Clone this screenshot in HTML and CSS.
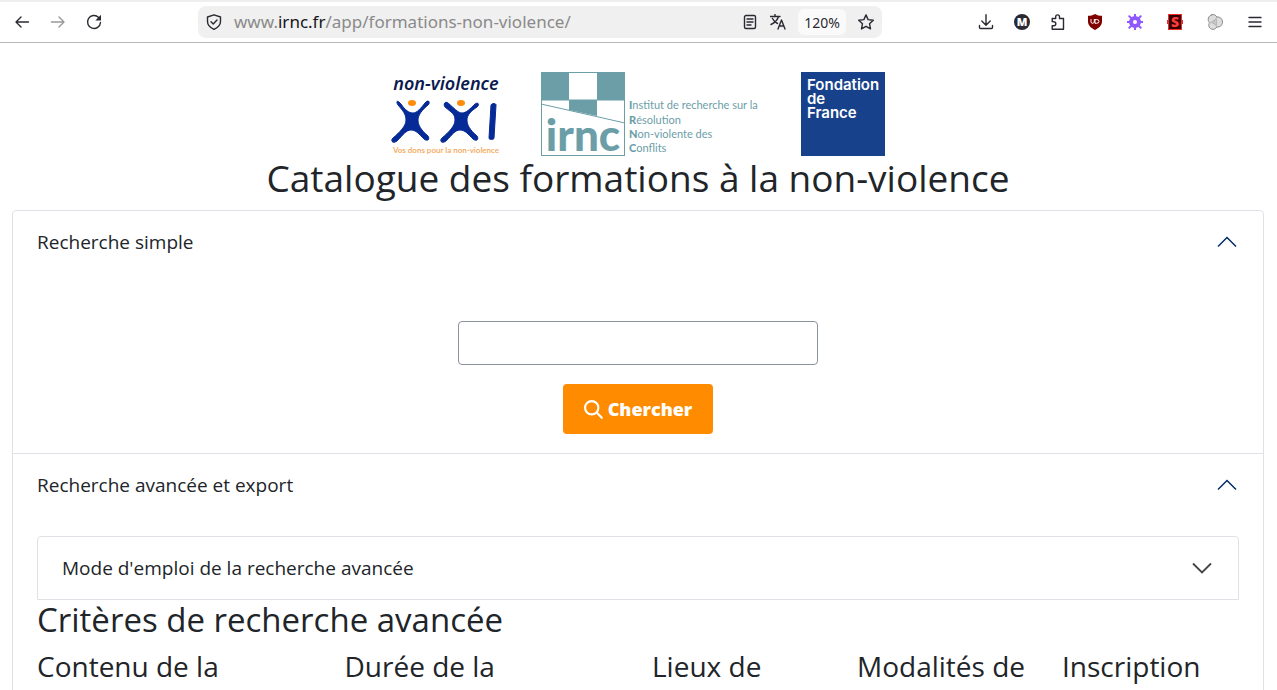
FILE: index.html
```html
<!DOCTYPE html>
<html lang="fr">
<head>
    <meta charset="UTF-8">
    <meta name="viewport" content="width=device-width, initial-scale=1">
    <title>Catalogue des formations à la non-violence</title>
    <link rel="stylesheet" href="styles.css">
</head>
<body>
    <div class="browser-bar">
        <div class="nav-buttons">
            <button type="button" aria-label="Page précédente">
                <svg width="16" height="16" viewBox="0 0 16 16"><path d="M14.500 8H2M7 3 2 8l5 5"/></svg>
            </button>
            <button type="button" class="disabled" aria-label="Page suivante">
                <svg width="16" height="16" viewBox="0 0 16 16"><path d="M1.500 8H14M9 3l5 5-5 5"/></svg>
            </button>
            <button type="button" aria-label="Actualiser">
                <svg width="16" height="16" viewBox="0 0 16 16"><path d="M14.500 8.500A6.500 6.500 0 1 1 12.600 3.400"/><path class="solid" d="M15 .8v5.700H9.300z"/></svg>
            </button>
        </div>

        <div class="url-bar">
            <svg width="16" height="16" viewBox="0 0 16 16"><path d="M8 .8 14.500 3v4.500c0 3.500-2.500 6-6.500 7.900-4-1.900-6.500-4.400-6.500-7.900V3z"/><path d="m5 7.800 2.200 2.200L11 6"/></svg>
            <div class="url">www.<span>irnc.fr</span>/app/formations-non-violence/</div>
            <button type="button" aria-label="Mode lecture">
                <svg width="16" height="16" viewBox="0 0 16 16"><rect x="2.500" y="1.500" width="11" height="13" rx="1.500"/><path d="M5 5h6M5 8h6M5 11h4"/></svg>
            </button>
            <button type="button" aria-label="Traduire">
                <svg width="16" height="16" viewBox="0 0 16 16"><path d="M0 2.500h10M5 .5v2M8.500 2.500C7.500 6.500 4 9 1 10.500M2.500 4.500c1 2.200 3 4 5 5M8 15l3.500-9 3.500 9M9.200 12h4.600"/></svg>
            </button>
            <button type="button" class="zoom">120%</button>
            <button type="button" aria-label="Marque-page">
                <svg width="16" height="16" viewBox="0 0 16 16"><path d="m8 .9 2.100 4.700 5.200.6-3.800 3.500 1 5.200L8 12.300l-4.500 2.600 1-5.200L.7 6.200l5.200-.6z"/></svg>
            </button>
        </div>

        <div class="toolbar">
            <div class="tools">
                <button type="button" aria-label="Téléchargements">
                    <svg width="16" height="16" viewBox="0 0 16 16"><path d="M8 .8v10M3.800 7 8 11.200 12.200 7M1.500 11.500v2q0 1 1 1h11q1 0 1-1v-2"/></svg>
                </button>
                <button type="button" aria-label="Compte M">
                    <svg width="16" height="16" viewBox="0 0 16 16"><circle class="solid" cx="8" cy="8" r="8"/><text class="badge-m" x="8" y="12" text-anchor="middle">M</text></svg>
                </button>
                <button type="button" aria-label="Extensions">
                    <svg width="16" height="16" viewBox="0 0 16 16"><path d="M2.200 7.500V4.500h3.500V2.800a1.900 1.900 0 0 1 3.800 0v1.700h4v10.700H2.200v-3.500h1.600a2 2 0 0 0 0-4z"/></svg>
                </button>
            </div>
            <div class="extensions">
                <button type="button" aria-label="Bloqueur">
                    <svg width="16" height="16" viewBox="0 0 16 16"><path class="shield" d="M8 0c2 1.300 4.500 1.800 7 1.800v5.700c0 3.800-3 6.500-7 8.500-4-2-7-4.700-7-8.500V1.800C3.500 1.800 6 1.300 8 0z"/><path class="shield-mark" d="M4 5.500v2.200q0 1.600 1.500 1.600T7.300 8V5.500M8 5.500v3.800h1.500q2.500 0 2.500-1.900T9.500 5.500H8"/></svg>
                </button>
                <button type="button" aria-label="Réglages">
                    <svg width="16" height="16" viewBox="0 0 16 16"><path class="gear" d="M8 0v16M0 8h16M2.300 2.300l11.400 11.400M13.700 2.300 2.300 13.700"/><circle class="gear-ring" cx="8" cy="8" r="4"/></svg>
                </button>
                <button type="button" aria-label="Extension S">
                    <svg width="16" height="16" viewBox="0 0 16 16"><path class="red" d="M1 0h14v6h1v4h-1v6H1v-6H0V6h1z"/><path class="dark" d="M2 1h12v14H2z"/><text class="badge-s" x="8" y="13" text-anchor="middle">S</text></svg>
                </button>
                <button type="button" aria-label="Confidentialité">
                    <svg width="16" height="16" viewBox="0 0 16 16"><path class="rings" d="M5 .7c2-.5 4 .5 4.800 2.300C13 2.500 15.500 5 15.500 8S13 13.500 9.800 13c-1 2-3.300 2.900-5.300 2.100C1.800 14 1 11 2.500 8.800 0 6 1.200 1.500 5 .7z"/><path class="ring-lines" d="M2.500 8.800 7 8M9.800 3 7.500 7M9.800 13 7.500 9M4.500 8l5-3v6z"/></svg>
                </button>
                <button type="button" aria-label="Menu">
                    <svg width="16" height="16" viewBox="0 0 16 16"><path d="M2 3.500h12M2 8h12M2 12.500h12"/></svg>
                </button>
            </div>
        </div>
    </div>

    <main>
        <div class="logos">
            <a href="#" aria-label="Non-violence XXI">
                <svg width="110" height="84" viewBox="0 0 110 84">
                    <text class="nv-title" x="55" y="18" text-anchor="middle">non-violence</text>
                    <g class="nv-blue">
                        <path d="M8 30 10 32C14 38 18 41 22 41S30 36 34 31C37 27 40 30 37 33C31 38 27 43 27 48S30 58 37 64C39 67 37 70 33 67C28 62 25 58 20 58S12 63 6 69C2 72-1 69 2 66C9 60 15 54 15 48S12 39 7 33C5 30 6 28 8 30z"/>
                        <path d="M57 31C63 36 67 41 71 41S79 37 84 32C87 30 89 32 86 35C80 39 76 43 76 48S79 58 86 64C88 67 86 70 82 67C77 62 74 58 69 58S61 63 55 69C51 72 48 69 51 66C58 60 64 54 64 48S61 41 54 35C52 32 54 29 57 31z"/>
                        <path d="M100 33C101 31 105 31 105 33L103 66C103 68 98 68 98 66z"/>
                    </g>
                    <ellipse class="nv-orange" cx="21" cy="31" rx="4" ry="3"/>
                    <ellipse class="nv-orange" cx="70" cy="31" rx="4" ry="3"/>
                    <text class="nv-tag" x="55" y="81" text-anchor="middle">Vos dons pour la non-violence</text>
                </svg>
            </a>
            <a href="#" aria-label="IRNC">
                <svg width="220" height="84" viewBox="0 0 220 84">
                    <rect class="irnc-frame" x=".5" y=".5" width="83" height="83"/>
                    <path class="irnc-fill" d="M0 0h28v28H0zM56 0h28v28H56zM28 28h28v16L28 38z"/>
                    <path class="irnc-frame" d="M0 32 84 51M0 28h84M28 0h28"/>
                    <text class="irnc-fill irnc-name" x="42" y="79" text-anchor="middle">irnc</text>
                    <g class="irnc-fill irnc-text">
                        <text x="88" y="37"><tspan>I</tspan>nstitut de recherche sur la</text>
                        <text x="88" y="52"><tspan>R</tspan>ésolution</text>
                        <text x="88" y="66"><tspan>N</tspan>on-violente des</text>
                        <text x="88" y="80"><tspan>C</tspan>onflits</text>
                    </g>
                </svg>
            </a>
            <a href="#" class="fdf">Fondation<br>de<br>France</a>
        </div>

        <h1>Catalogue des formations à la non-violence</h1>

        <div class="accordion">
            <section>
                <button type="button" class="accordion-button open" aria-expanded="true">
                    Recherche simple
                    <svg width="24" height="24" viewBox="0 0 16 16"><path d="m2 11 6-6 6 6"/></svg>
                </button>
                <form class="simple-search">
                    <input type="text" name="q" aria-label="Recherche simple">
                    <button type="submit" class="btn-search">
                        <svg width="19" height="19" viewBox="0 0 16 16"><circle cx="6.500" cy="6.500" r="5.600"/><path d="m10.800 10.800 4.200 4.200"/></svg>
                        Chercher
                    </button>
                </form>
            </section>

            <section>
                <button type="button" class="accordion-button open" aria-expanded="true">
                    Recherche avancée et export
                    <svg width="24" height="24" viewBox="0 0 16 16"><path d="m2 11 6-6 6 6"/></svg>
                </button>
                <div class="advanced-search">
                    <div class="help">
                        <button type="button" class="accordion-button" aria-expanded="false">
                            Mode d'emploi de la recherche avancée
                            <svg width="24" height="24" viewBox="0 0 16 16"><path d="m2 5 6 6 6-6"/></svg>
                        </button>
                    </div>
                    <h2>Critères de recherche avancée</h2>
                    <div class="criteria">
                        <h3>Contenu de la formation</h3>
                        <h3>Durée de la formation</h3>
                        <h3>Lieux de formation</h3>
                        <h3>Modalités de la formation</h3>
                        <h3>Inscription</h3>
                    </div>
                </div>
            </section>
        </div>
    </main>
</body>
</html>
```
FILE: styles.css
```css
* {
    box-sizing: border-box;
}
body {
    display: flex;
    flex-direction: column;
    height: 100vh;
    margin: 0;
    overflow: hidden;
    font-family: "Open Sans", "Noto Sans", sans-serif;
    font-size: 19px;
    line-height: 1.5;
    color: #212529;
    background-color: #fff;
}
button {
    font-family: inherit;
    color: inherit;
    border: none;
    background: none;
    cursor: pointer;
}
svg {
    display: block;
    fill: none;
    stroke: currentColor;
}
svg text {
    stroke: none;
}

/* browser toolbar */
.browser-bar {
    display: flex;
    flex: none;
    align-items: center;
    justify-content: space-between;
    height: 43px;
    padding: 0 14px;
    border-top: 2px solid #eee;
    border-bottom: 1px solid #b8b8b8;
    color: #2b2a33;
    font-family: "Noto Sans", sans-serif;
}
.browser-bar button {
    flex: none;
    padding: 0;
}
.browser-bar svg {
    flex: none;
    stroke-width: 1.4;
    stroke-linejoin: round;
    stroke-linecap: round;
}
.nav-buttons {
    display: flex;
    gap: 20px;
}
.nav-buttons .disabled {
    color: #999;
}
.url-bar {
    display: flex;
    align-items: center;
    gap: 12px;
    width: 684px;
    height: 32px;
    padding: 0 8px;
    border-radius: 8px;
    background-color: #f0f0f0;
}
.url {
    flex: 1;
    font-size: 17px;
    color: #8a8a8a;
}
.url span {
    color: #15141a;
}
.url-bar .zoom {
    width: 48px;
    height: 26px;
    border-radius: 6px;
    background-color: #fafafa;
    font-size: 14px;
}
.toolbar {
    display: flex;
    gap: 21px;
}
.tools {
    display: flex;
    gap: 20px;
}
.extensions {
    display: flex;
    gap: 24px;
}
.solid {
    fill: currentColor;
    stroke: none;
}
.badge-m {
    font-size: 11px;
    font-weight: 900;
    fill: #fff;
}
.shield {
    fill: #800000;
    stroke: none;
}
.shield-mark {
    stroke: #fff;
    stroke-width: 1;
}
.gear {
    stroke: #9059ff;
    stroke-width: 2;
}
.gear-ring {
    stroke: #9059ff;
    stroke-width: 4;
    fill: #fff;
}
.red {
    fill: #f02a2a;
    stroke: none;
}
.dark {
    fill: #300;
    stroke: none;
}
.badge-s {
    font-size: 14px;
    font-weight: 900;
    fill: #ff3a3a;
}
.rings {
    fill: #ddd;
    stroke: #8a8a8a;
    stroke-width: 1;
}
.ring-lines {
    fill: #ccc;
    stroke: #b8b8b8;
    stroke-width: 1;
}

/* page */
main {
    flex: 1;
    min-height: 0;
    padding: 29px 13px 0 12px;
    overflow: hidden;
}
.logos {
    display: flex;
    justify-content: center;
    gap: 40px;
}
.nv-title {
    font-family: "Noto Sans", sans-serif;
    font-size: 18px;
    font-style: italic;
    font-weight: 600;
    fill: #0b1a50;
}
.nv-blue {
    fill: #062a96;
    stroke: #062a96;
}
.nv-orange {
    fill: #ff8c0a;
    stroke: none;
}
.nv-tag {
    font-family: Lato, sans-serif;
    font-size: 8px;
    font-weight: 600;
    fill: #f5a656;
}
.irnc-frame {
    stroke: #6c9ea8;
}
.irnc-fill {
    fill: #6c9ea8;
    stroke: none;
}
.irnc-name {
    font-family: Lato, sans-serif;
    font-size: 44px;
    font-weight: 900;
}
.irnc-text {
    font-family: Lato, sans-serif;
    font-size: 11px;
}
.irnc-text tspan {
    font-weight: 900;
}
.fdf {
    width: 84px;
    height: 84px;
    padding: 6px;
    background-color: #17428b;
    color: #fff;
    font-family: Inter, sans-serif;
    font-size: 15px;
    font-weight: 600;
    line-height: 14px;
    text-decoration: none;
}
h1, h2, h3 {
    margin: 0;
    font-weight: 400;
}
h1 {
    margin-bottom: 10px;
    font-size: 37px;
    line-height: 44px;
    text-align: center;
}
h2 {
    margin-bottom: 9px;
    font-size: 33px;
    line-height: 40px;
}
h3 {
    padding: 0 14px;
    font-size: 28px;
    line-height: 34px;
}
.accordion {
    border: 1px solid #dee2e6;
    border-radius: 4px;
}
.accordion section + section {
    border-top: 1px solid #dee2e6;
}
.accordion-button {
    display: flex;
    align-items: center;
    justify-content: space-between;
    width: 100%;
    height: 62px;
    padding: 0 24px;
    font-size: 19px;
    text-align: left;
}
.accordion-button svg {
    color: #444;
    stroke-width: 1.2;
}
.open svg {
    color: #052c65;
    stroke-width: 1;
}
.simple-search {
    display: flex;
    flex-direction: column;
    align-items: center;
    gap: 19px;
    padding: 48px 24px 19px;
}
.simple-search input {
    width: 360px;
    height: 44px;
    padding: 7px 14px;
    border: 1px solid #8a929c;
    border-radius: 4px;
    font: inherit;
}
.btn-search {
    display: flex;
    align-items: center;
    justify-content: center;
    gap: 5px;
    width: 150px;
    height: 50px;
    padding: 0;
    border-radius: 4px;
    background-color: #ff8c00;
    color: #fff;
    font-size: 18px;
    font-weight: 800;
}
.btn-search svg {
    stroke-width: 1.8;
    stroke-linecap: round;
}
.advanced-search {
    padding: 20px 24px;
}
.help {
    border: 1px solid #dee2e6;
    border-radius: 4px 4px 0 0;
}
.criteria {
    display: grid;
    grid-template-columns: 3fr 3fr 2fr 2fr 2fr;
    margin: 0 -14px;
}
```
